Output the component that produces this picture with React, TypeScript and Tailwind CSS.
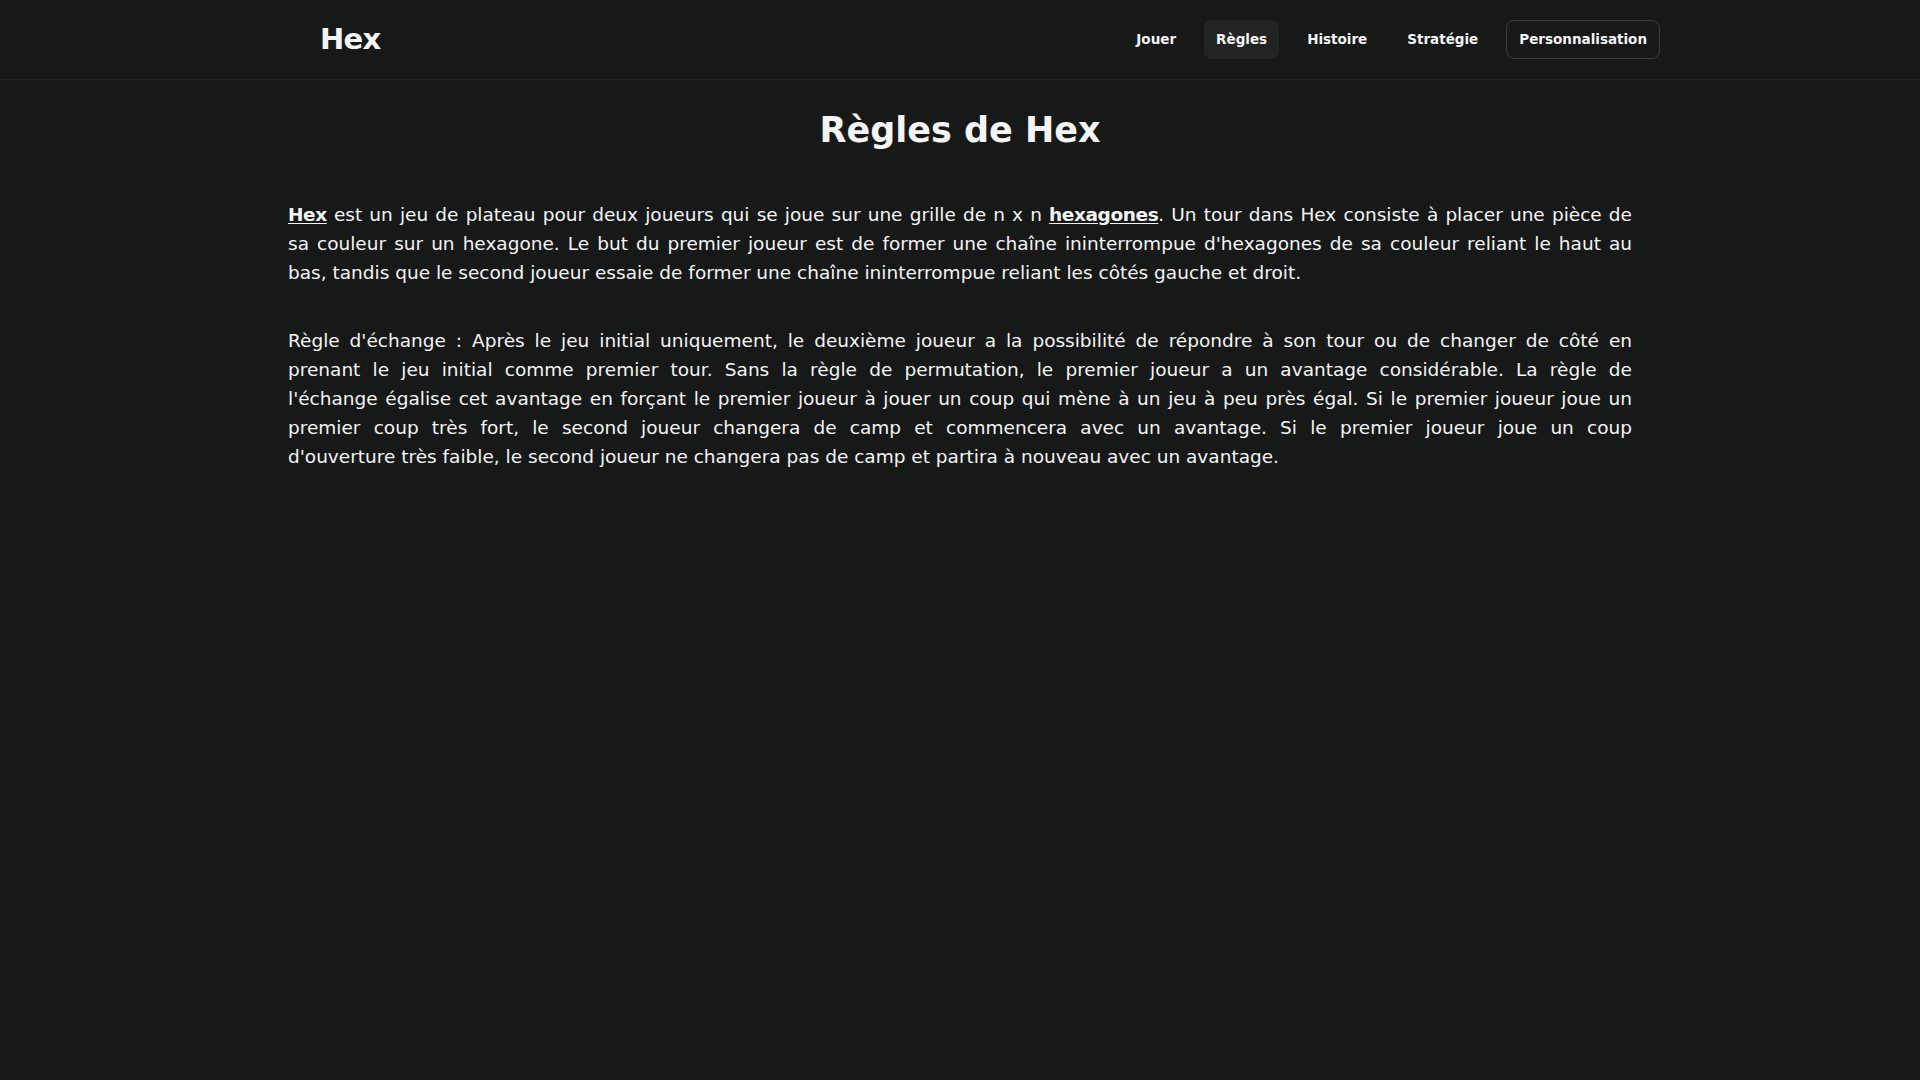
import React from "react";

const NAV = [
  { label: "Jouer" },
  { label: "Règles", active: true },
  { label: "Histoire" },
  { label: "Stratégie" },
  { label: "Personnalisation", outlined: true },
];

// the reference wraps with a wider font, so each justified line is laid out as its own block
const Line = ({ children, last = false }: { children: React.ReactNode; last?: boolean }) => (
  <span className={`block whitespace-nowrap text-justify ${last ? "" : "[text-align-last:justify]"}`}>{children}</span>
);

const Link = ({ children }: { children: string }) => <a className="font-semibold tracking-[-0.4px] underline underline-offset-2">{children}</a>;

export default function App() {
  return (
    <div className="min-h-screen bg-[#161918] text-[#f4f4f4]" style={{ fontFamily: '"DejaVu Sans", "Open Sans", sans-serif' }}>
      <header className="h-20 border-b border-[#222625]">
        <div className="mx-auto flex h-full w-[1400px] items-center justify-between pl-[60px]">
          <span className="text-[29px] font-semibold tracking-tight">Hex</span>
          <nav className="flex items-center gap-4">
            {NAV.map((n) => (
              <a
                key={n.label}
                className={`flex h-[39px] items-center rounded-lg px-3 text-[13.5px] font-semibold ${n.active ? "bg-[#222524]" : ""} ${n.outlined ? "border border-[#3b3e3d]" : ""}`}
              >
                {n.label}
              </a>
            ))}
          </nav>
        </div>
      </header>

      <main className="mx-auto w-[1344px]">
        <h1 className="pt-[20px] text-center text-[35px] font-semibold leading-[60px]">Règles de Hex</h1>

        <p className="mt-[40px] text-[18.5px] leading-[29px]">
          <Line>
            <Link>Hex</Link> est un jeu de plateau pour deux joueurs qui se joue sur une grille de n x n <Link>hexagones</Link>. Un tour dans Hex
            consiste à placer une pièce de
          </Line>
          <Line>sa couleur sur un hexagone. Le but du premier joueur est de former une chaîne ininterrompue d'hexagones de sa couleur reliant le haut au</Line>
          <Line last>bas, tandis que le second joueur essaie de former une chaîne ininterrompue reliant les côtés gauche et droit.</Line>
        </p>

        <p className="mt-[39px] text-[18.5px] leading-[29px]">
          <Line>
            Règle d'échange : Après le jeu initial uniquement, le deuxième joueur a la possibilité de répondre à son tour ou de changer de côté en
          </Line>
          <Line>prenant le jeu initial comme premier tour. Sans la règle de permutation, le premier joueur a un avantage considérable. La règle de</Line>
          <Line>l'échange égalise cet avantage en forçant le premier joueur à jouer un coup qui mène à un jeu à peu près égal. Si le premier joueur joue un</Line>
          <Line>premier coup très fort, le second joueur changera de camp et commencera avec un avantage. Si le premier joueur joue un coup</Line>
          <Line last>d'ouverture très faible, le second joueur ne changera pas de camp et partira à nouveau avec un avantage.</Line>
        </p>
      </main>
    </div>
  );
}
